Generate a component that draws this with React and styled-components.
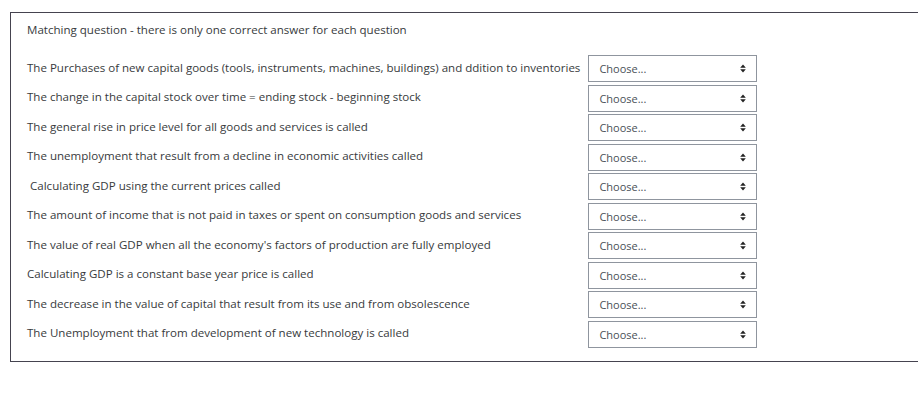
import React from "react";
import styled, { createGlobalStyle } from "styled-components";

const GlobalStyle = createGlobalStyle`
  html, body {
    margin: 0;
    padding: 0;
    background: #fff;
    font-family: "Open Sans", "Liberation Sans", sans-serif;
  }
`;

const Page = styled.div`
  padding: 12px 0 0 10px;
`;

// the box runs off the right edge in the screenshot, so no right border
const QuestionBox = styled.div`
  border: 1.5px solid #45434f;
  border-right: none;
  padding: 9px 16px 13px 16px;
`;

const Prompt = styled.p`
  margin: 0 0 17px 0;
  font-size: 11.55px;
  line-height: 16px;
  color: #373a3c;
`;

const MatchGrid = styled.div`
  display: grid;
  grid-template-columns: max-content 169px;
  column-gap: 8px;
  row-gap: 2.5px;
  align-items: center;
`;

const Stem = styled.div`
  font-size: 11.55px;
  line-height: 16px;
  color: #373a3c;
  white-space: pre;
  margin-top: -2px;
`;

const Select = styled.div`
  box-sizing: border-box;
  height: 27px;
  border: 1px solid #8f959e;
  display: flex;
  align-items: center;
  justify-content: space-between;
  padding: 0 10px 0 10px;
  font-size: 11px;
  color: #495057;
`;

const Caret = () => (
  <svg width="6" height="9" viewBox="0 0 6 9">
    <path d="M3 0.5 L5.8 3.8 L0.2 3.8 Z" fill="#222" />
    <path d="M3 8.5 L5.8 5.2 L0.2 5.2 Z" fill="#222" />
  </svg>
);

const stems = [
  "The Purchases of new capital goods (tools, instruments, machines, buildings) and ddition to inventories",
  "The change in the capital stock over time = ending stock - beginning stock",
  "The general rise in price level for all goods and services is called",
  "The unemployment that result from a decline in economic activities called",
  " Calculating GDP using the current prices called",
  "The amount of income that is not paid in taxes or spent on consumption goods and services",
  "The value of real GDP when all the economy's factors of production are fully employed",
  "Calculating GDP is a constant base year price is called",
  "The decrease in the value of capital that result from its use and from obsolescence",
  "The Unemployment that from development of new technology is called",
];

export default function App() {
  return (
    <>
      <GlobalStyle />
      <Page>
        <QuestionBox>
          <Prompt>Matching question - there is only one correct answer for each question</Prompt>
          <MatchGrid>
            {stems.map((s, i) => (
              <React.Fragment key={i}>
                <Stem>{s}</Stem>
                <Select>
                  <span>Choose...</span>
                  <Caret />
                </Select>
              </React.Fragment>
            ))}
          </MatchGrid>
        </QuestionBox>
      </Page>
    </>
  );
}
